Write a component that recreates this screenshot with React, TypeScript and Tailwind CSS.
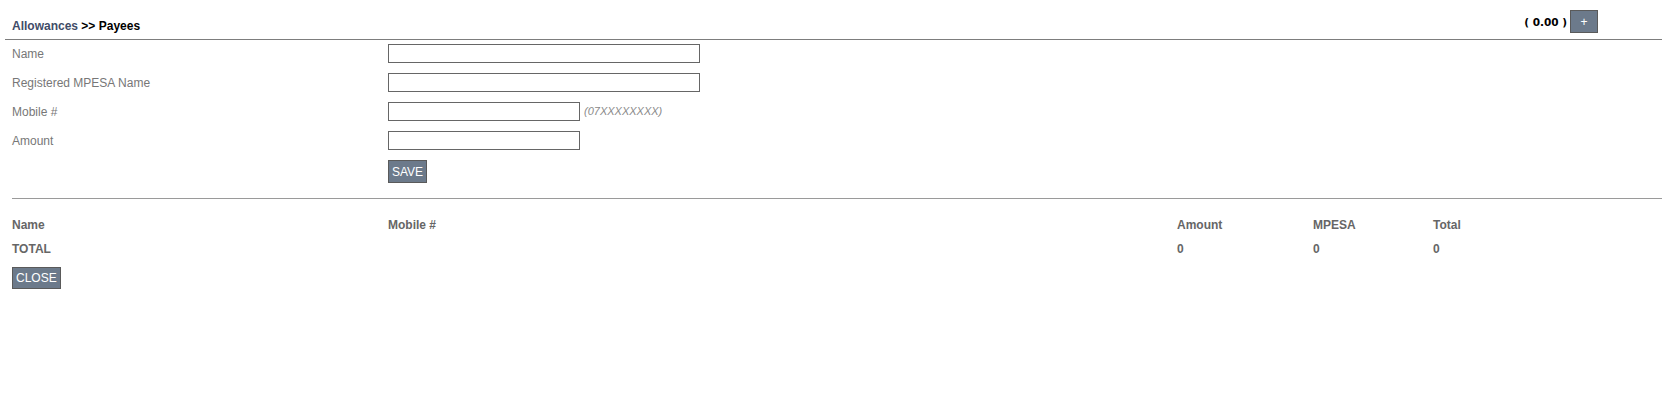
const fields = [
  { label: 'Name', width: 'w-[312px]' },
  { label: 'Registered MPESA Name', width: 'w-[312px]' },
  { label: 'Mobile #', width: 'w-[192px]', hint: '(07XXXXXXXX)' },
  { label: 'Amount', width: 'w-[192px]' },
];

const cols = 'grid grid-cols-[376px_789px_136px_120px_1fr]';

const App = () => {
  return (
    <div className="min-h-[406px] bg-white text-[12px] font-['Liberation_Sans',Arial,sans-serif]">
      {/* header */}
      <div className="ml-[5px] pt-[10px] border-b border-[#7d7d7d] h-[40px] flex justify-between">
        <div className="pl-[7px] pt-[7px] font-bold text-black">
          <span className="text-[#3f4c68]">Allowances</span> &gt;&gt; Payees
        </div>
        <div className="flex items-start gap-[3px] pr-[64px]">
          <span className="mt-[5px] font-bold text-black font-['DejaVu_Sans',Verdana,sans-serif] text-[10.5px]">( 0.00 )</span>
          <button className="w-[28px] h-[23px] bg-[#6c7a8b] border border-[#5a5a5a] text-white text-[12px] leading-none">+</button>
        </div>
      </div>

      {/* form */}
      <div className="pl-[12px] pt-[4px]">
        {fields.map((f) => (
          <div key={f.label} className="flex items-center h-[19px] mb-[10px]">
            <div className="w-[376px] text-[#777]">{f.label}</div>
            <input className={`${f.width} h-[19px] border border-[#666] bg-white`} />
            {f.hint && <span className="ml-[4px] italic text-[11px] text-[#8a8a8a]">{f.hint}</span>}
          </div>
        ))}
        <div className="pl-[376px]">
          <button className="h-[23px] px-[3px] bg-[#6c7a8b] border border-[#5a5a5a] text-white text-[12px] leading-none">SAVE</button>
        </div>
      </div>

      {/* table */}
      <div className="ml-[12px] mt-[15px] border-t border-[#9a9a9a] pt-[17px]">
        <div className={`${cols} font-bold text-[#666] h-[16px] items-center`}>
          <div>Name</div>
          <div>Mobile #</div>
          <div>Amount</div>
          <div>MPESA</div>
          <div>Total</div>
        </div>
        <div className={`${cols} font-bold text-[#666] mt-[8px] h-[16px] items-center`}>
          <div>TOTAL</div>
          <div></div>
          <div>0</div>
          <div>0</div>
          <div>0</div>
        </div>
        <button className="mt-[11px] h-[22px] px-[3px] bg-[#6c7a8b] border border-[#5a5a5a] text-white text-[12px] leading-none">CLOSE</button>
      </div>
    </div>
  );
};

export default App;
